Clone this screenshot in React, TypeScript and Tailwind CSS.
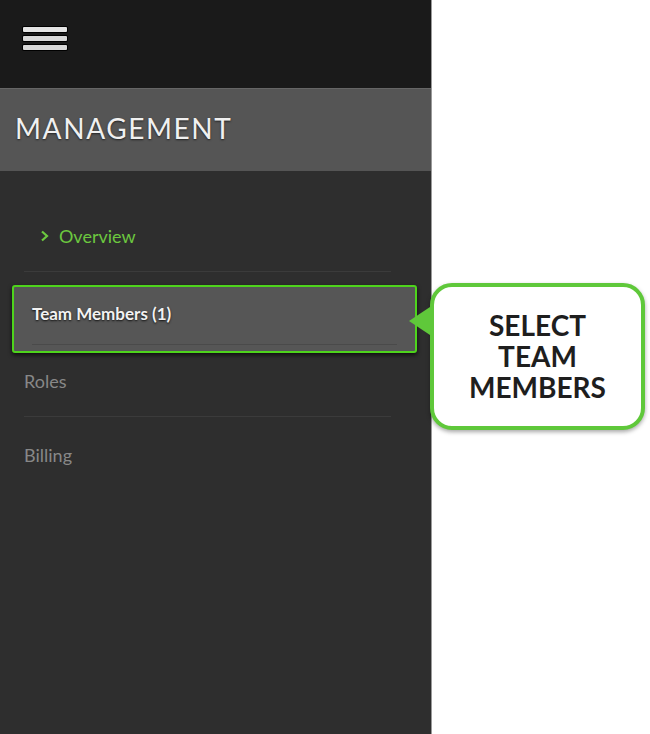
export default function App() {
  return (
    <div className="relative flex h-[734px] w-[650px] bg-white font-['Lato','Noto_Sans',sans-serif]">
      {/* SIDEBAR */}
      <div className="flex w-[432px] flex-col border-r border-[#9a9a9a]">
        <div className="h-[88px] bg-[#1a1a1a] pl-[23px] pt-[27px]">
          <div className="flex w-[44px] flex-col gap-[4px]">
            <span className="h-[5px] rounded-[1px] bg-[#e4e4e4] shadow-[0_0_0_1px_#000]" />
            <span className="h-[5px] rounded-[1px] bg-[#d8d8d8] shadow-[0_0_0_1px_#000]" />
            <span className="h-[5px] rounded-[1px] bg-[#d8d8d8] shadow-[0_0_0_1px_#000]" />
          </div>
        </div>

        <div className="flex h-[83px] items-center border-t border-[#666] bg-[#555555] pb-[5px] pl-[15px]">
          <h1 className="text-[28px] tracking-[1.6px] text-[#f0f0f0] [text-shadow:0_1px_2px_#222]">
            MANAGEMENT
          </h1>
        </div>

        <nav className="flex-1 bg-[#2e2e2e] pr-[16px]">
          <div className="mx-[24px] flex items-center gap-[10px] border-b border-[#3b3b3b] pb-[23px] pl-[16px] pt-[53px] text-[18px] leading-[24px] text-[#6cc83f]">
            <svg width="9" height="12" viewBox="0 0 9 12" fill="none">
              <path d="M2 1.5l5 4.5-5 4.5" stroke="#6cc83f" strokeWidth="2.2" />
            </svg>
            <span>Overview</span>
          </div>

          {/* selected */}
          <div className="ml-[12px] mr-[-2px] mt-[13px] h-[68px] rounded-[3px] border-2 border-[#4ed41c] bg-[#565656] shadow-[0_2px_4px_rgba(0,0,0,0.7)]">
            <div className="mx-[18px] h-[58px] border-b border-[#4a4a4a] pt-[16px] text-[17px] font-bold leading-[22px] text-[#f2f2f2] [text-shadow:0_1px_2px_#111]">
              Team Members (1)
            </div>
          </div>

          <div className="mx-[24px] border-b border-[#3b3b3b] pb-[24px] pt-[17px] text-[18px] leading-[22px] text-[#888888]">
            Roles
          </div>
          <div className="mx-[24px] pt-[27px] text-[18px] leading-[22px] text-[#888888]">
            Billing
          </div>
        </nav>
      </div>

      {/* CALLOUT */}
      <div className="absolute left-[430px] top-[283px] flex h-[147px] w-[215px] items-center justify-center rounded-[22px] border-4 border-[#5fc83a] bg-white shadow-[0_2px_4px_rgba(0,0,0,0.35)]">
        <svg className="absolute left-[-25px] top-[16px]" width="24" height="36" viewBox="0 0 24 36">
          <path d="M24 2L0 18l24 16z" fill="#5fc83a" />
        </svg>
        <p className="text-center text-[28px] font-bold leading-[31px] text-[#1e1e1e]">
          SELECT
          <br />
          TEAM
          <br />
          MEMBERS
        </p>
      </div>
    </div>
  );
}
